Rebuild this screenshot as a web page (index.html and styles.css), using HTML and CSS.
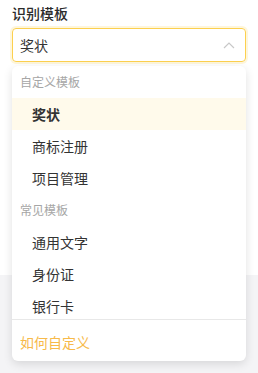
FILE: index.html
```html
<!DOCTYPE html>
<html lang="zh-CN">
<head>
    <meta charset="UTF-8">
    <title>识别模板</title>
    <link rel="stylesheet" href="styles.css">
</head>
<body>

<div class="page">
    <div class="panel">
        <div class="field-label">识别模板</div>
        <div class="select-wrap">
            <div class="select-box">
                <span class="select-value">奖状</span>
                <svg class="arrow" width="12" height="8" viewBox="0 0 12 8">
                    <path d="M1 7 L6 2 L11 7" fill="none" stroke="#c8c8c8" stroke-width="1.2"/>
                </svg>
            </div>

            <!-- 下拉菜单 -->
            <div class="dropdown">
                <div class="dropdown-list">
                    <div class="group-title">自定义模板</div>
                    <div class="option selected">奖状</div>
                    <div class="option">商标注册</div>
                    <div class="option">项目管理</div>
                    <div class="group-title">常见模板</div>
                    <div class="option">通用文字</div>
                    <div class="option">身份证</div>
                    <div class="option">银行卡</div>
                </div>
                <div class="dropdown-footer">如何自定义</div>
            </div>
        </div>
    </div>
    <div class="rest"></div>
</div>

</body>
</html>
```

FILE: styles.css
```css
body {
    margin: 0;
    font-family: "Noto Sans CJK SC", "Noto Sans", sans-serif;
    background-color: #f4f4f6;
}

.page {
    width: 258px;
    height: 373px;
    display: flex;
    flex-direction: column;
}

.panel {
    background-color: #fff;
    height: 275px;
    padding: 0 12px;
    box-sizing: border-box;
}

.field-label {
    font-size: 14px;
    font-weight: 500;
    color: #2b2b2b;
    line-height: 20px;
    padding-top: 3px;
    margin-bottom: 5px;
}

.select-wrap {
    position: relative;
}

.select-box {
    height: 34px;
    border: 1px solid #fcd04f;
    border-radius: 4px;
    box-shadow: 0 0 0 2px rgba(252, 208, 79, 0.2);
    display: flex;
    align-items: center;
    justify-content: space-between;
    padding: 0 8px 0 7px;
    box-sizing: border-box;
}

.select-value {
    font-size: 14px;
    color: #333;
}

.arrow {
    margin-right: 2px;
}

.dropdown {
    position: absolute;
    top: 38px;
    left: 0;
    right: 0;
    background-color: #fff;
    border-radius: 6px;
    box-shadow: 0 3px 10px rgba(0, 0, 0, 0.12);
    overflow: hidden;
}

.dropdown-list {
    height: 253px;
    overflow: hidden;
}

.group-title {
    height: 32px;
    line-height: 32px;
    padding-left: 8px;
    font-size: 12px;
    color: #a6a6a6;
}

.option {
    height: 32px;
    line-height: 32px;
    padding-left: 20px;
    font-size: 14px;
    color: #333;
}

.option.selected {
    background-color: #fffaeb;
    font-weight: bold;
}

.dropdown-footer {
    border-top: 1px solid #e8e8e8;
    height: 41px;
    line-height: 44px;
    padding-left: 8px;
    font-size: 14px;
    color: #f7ba4a;
}

.rest {
    flex: 1;
}
```
